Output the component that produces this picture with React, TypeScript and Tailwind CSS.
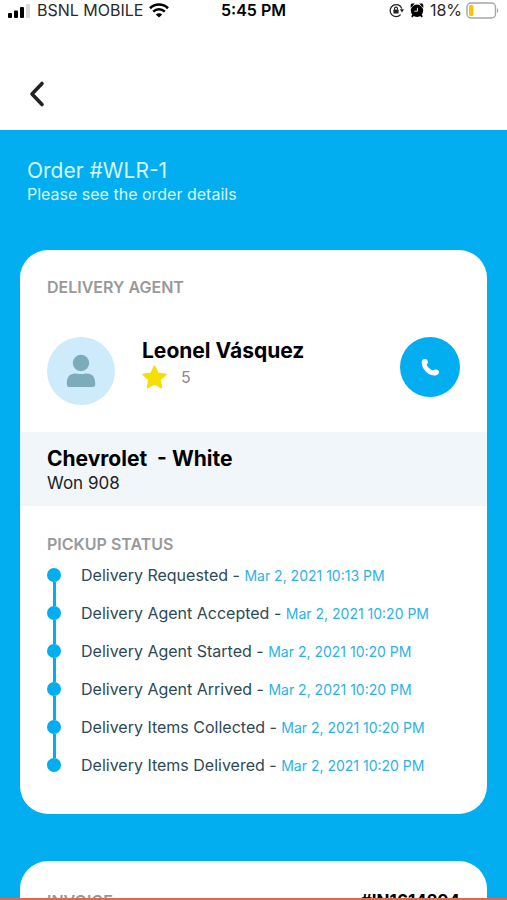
interface StatusStep {
  label: string;
  time: string;
}

const STEPS: StatusStep[] = [
  { label: 'Delivery Requested', time: 'Mar 2, 2021 10:13 PM' },
  { label: 'Delivery Agent Accepted', time: 'Mar 2, 2021 10:20 PM' },
  { label: 'Delivery Agent Started', time: 'Mar 2, 2021 10:20 PM' },
  { label: 'Delivery Agent Arrived', time: 'Mar 2, 2021 10:20 PM' },
  { label: 'Delivery Items Collected', time: 'Mar 2, 2021 10:20 PM' },
  { label: 'Delivery Items Delivered', time: 'Mar 2, 2021 10:20 PM' },
];

function SignalIcon() {
  return (
    <svg width="23" height="15" viewBox="0 0 23 15" aria-hidden="true">
      <rect x="0" y="10" width="4" height="5" rx="1" />
      <rect x="6" y="7.5" width="4" height="7.5" rx="1" />
      <rect x="12" y="4" width="4" height="11" rx="1" />
      <rect x="18" y="1" width="4" height="14" rx="1" fill="#d9d9d9" />
    </svg>
  );
}

function WifiIcon() {
  return (
    <svg width="20" height="15" viewBox="0 0 20 15" fill="none" stroke="#000" aria-hidden="true">
      <path d="M1 5.2C6.2.3 13.8.3 19 5.2" strokeWidth="2.6" />
      <path d="M4.2 8.6c3.4-3.2 8.2-3.2 11.6 0" strokeWidth="2.6" />
      <path d="M10 14.6 6.8 11.4c1.8-1.7 4.6-1.7 6.4 0z" fill="#000" stroke="none" />
    </svg>
  );
}

function RotationLockIcon() {
  return (
    <svg width="15" height="15" viewBox="0 0 15 15" fill="none" stroke="#222" aria-hidden="true">
      <path d="M12.8 5.6A6 6 0 1 0 11.6 11.6" strokeWidth="1.3" />
      <path d="M10.8 6.2h4.2l-2 3.2z" fill="#222" stroke="none" />
      <rect x="4.4" y="6.6" width="5.2" height="4" rx="0.6" fill="#222" stroke="none" />
      <path d="M5.5 6.8V5.6a1.5 1.5 0 0 1 3 0v1.2" strokeWidth="1.1" />
    </svg>
  );
}

function AlarmIcon() {
  return (
    <svg width="14" height="15" viewBox="0 0 14 15" aria-hidden="true">
      <circle cx="7" cy="7.8" r="6.2" />
      <path d="M.7 5V2.2C.7 1.2 1.5.6 2.5.6h2.3zM13.3 5V2.2c0-1-.8-1.6-1.8-1.6H9.2z" />
      <path d="m3 12-1 2M11 12l1 2" stroke="#000" strokeWidth="1.8" />
      <path d="M7.4 4.8v3.4H4.4" fill="none" stroke="#fff" strokeWidth="0.9" />
    </svg>
  );
}

function BatteryIcon() {
  return (
    <svg width="33" height="17" viewBox="0 0 33 17" aria-hidden="true">
      <rect x="1" y="1" width="28.5" height="15" rx="4" fill="#fff" stroke="#a6a6a6" strokeWidth="1.4" />
      <rect x="3" y="3" width="4.5" height="11" rx="1.6" fill="#fdc500" />
      <path d="M31 6v5c1.6-.7 1.6-4.3 0-5z" fill="#a6a6a6" />
    </svg>
  );
}

function StatusBar() {
  return (
    <div className="grid h-5 grid-cols-[1fr_auto_1fr] items-center px-2 text-base leading-5 text-[#2a2a2a]">
      <div className="flex items-center gap-1.5">
        <SignalIcon />
        <span>BSNL MOBILE</span>
        <WifiIcon />
      </div>
      <span className="font-semibold text-black">5:45 PM</span>
      <div className="flex items-center justify-end gap-1">
        <div className="flex items-center gap-1.5">
          <RotationLockIcon />
          <AlarmIcon />
          <span>18%</span>
        </div>
        <BatteryIcon />
      </div>
    </div>
  );
}

function AgentRow() {
  return (
    <div className="mt-[38px] flex items-start px-[27px]">
      <div className="flex size-[68px] items-center justify-center rounded-full bg-[#cdebfa]">
        <svg width="30" height="34" viewBox="0 0 30 34" fill="#7eabba" aria-hidden="true">
          <circle cx="15" cy="9" r="8.2" />
          <path d="M.8 29c0-6 3-9.6 8.200-9.600 1.800 0 3.600.7 6 .7s4.200-.7 6-.7c5.200 0 8.200 3.600 8.200 9.600v1.500a2.500 2.500 0 0 1-2.500 2.500H3.300A2.500 2.500 0 0 1 .8 30.500z" />
        </svg>
      </div>
      <div className="ml-[27px] flex-1 pt-px">
        <h2 className="text-[21px] leading-[26px] font-bold">Leonel Vásquez</h2>
        <div className="flex items-center gap-3.5 text-[#8c8c8c]">
          <svg width="25" height="26" viewBox="0 0 25 26" aria-hidden="true">
            <path
              d="m12.5 2.5 3.2 7 7.8.9-5.7 5.4 1.5 7.7-6.8-3.8-6.8 3.8 1.5-7.7-5.7-5.4 7.8-.9z"
              fill="#f5df06"
              stroke="#f5df06"
              strokeWidth="2"
              strokeLinejoin="round"
            />
          </svg>
          <span className="text-base">5</span>
        </div>
      </div>
      <button
        type="button"
        aria-label="Call delivery agent"
        className="flex size-[60px] items-center justify-center rounded-full bg-[#02aeef]"
      >
        <svg width="19" height="19" viewBox="0 0 19 19" fill="#fff" aria-hidden="true">
          <path d="M.7 4.5C.7 2.500 2 .9 3.900.9c1.700 0 3 1.300 3 3 0 1.300-.6 2-1.300 2.700.9 2.600 3.400 5 6.400 5.900.8-.8 1.500-1.100 2.600-1.100 2 0 3.500 1 3.500 2.700 0 2.100-2 3.500-4.400 3.500C7.200 17.600.7 11.200.7 4.500z" />
        </svg>
      </button>
    </div>
  );
}

function Timeline() {
  return (
    <ol>
      {STEPS.map((step, i) => (
        <li key={step.label} className="flex h-[38px] items-center">
          <div className="flex w-[14px] flex-col items-center self-stretch">
            <span className={i === 0 ? 'w-[3px] flex-1' : 'w-[3px] flex-1 bg-[#02aeef]'} />
            <span className="size-[14px] rounded-full bg-[#02aeef]" />
            <span className={i === STEPS.length - 1 ? 'w-[3px] flex-1' : 'w-[3px] flex-1 bg-[#02aeef]'} />
          </div>
          <p className="ml-5 text-base whitespace-nowrap text-[#2d4a55]">
            {step.label} - <time className="text-sm text-[#2bb2ea]">{step.time}</time>
          </p>
        </li>
      ))}
    </ol>
  );
}

export default function App() {
  return (
    <div className="flex h-screen flex-col overflow-hidden border-b-2 border-[#e0694a] bg-white font-[Inter,'Liberation_Sans',sans-serif] text-black">
      <header className="shrink-0">
        <StatusBar />
        <nav className="flex h-[110px] items-center px-[27px] pt-[38px]">
          <button type="button" aria-label="Back">
            <svg width="20" height="28" viewBox="0 0 20 28" fill="none" aria-hidden="true">
              <path d="M15 3.5 5 14l10 10.5" stroke="#222" strokeWidth="3.6" strokeLinecap="round" strokeLinejoin="round" />
            </svg>
          </button>
        </nav>
      </header>

      <main className="min-h-0 flex-1 overflow-hidden bg-[#02aeef] px-5 pt-7">
        <div className="px-[7px] text-[#d5f8ff]">
          <h1 className="text-[21px] leading-[26px]">Order #WLR-1</h1>
          <p className="text-base leading-5">Please see the order details</p>
        </div>

        <section className="mt-[46px] rounded-[28px] bg-white pt-[25px] pb-[30px]">
          <h3 className="px-[27px] text-base font-semibold text-[#999]">DELIVERY AGENT</h3>
          <AgentRow />
          <div className="mt-[27px] h-[74px] bg-[#f0f6fa] px-[27px] pt-[14px]">
            <h2 className="text-[21px] leading-[26px] font-bold whitespace-pre">Chevrolet  - White</h2>
            <p className="text-[17px] leading-[22px] text-[#222]">Won 908</p>
          </div>
          <div className="px-[27px] pt-[26px]">
            <h3 className="text-base font-semibold text-[#999]">PICKUP STATUS</h3>
            <Timeline />
          </div>
        </section>

        <section className="mt-[47px] rounded-t-[28px] bg-white px-[27px] pt-7 pb-[30px]">
          <div className="flex items-center justify-between">
            <h3 className="text-base font-semibold text-[#999]">INVOICE</h3>
            <span className="text-[17px] leading-6 font-bold">#IN1614294</span>
          </div>
        </section>
      </main>
    </div>
  );
}
